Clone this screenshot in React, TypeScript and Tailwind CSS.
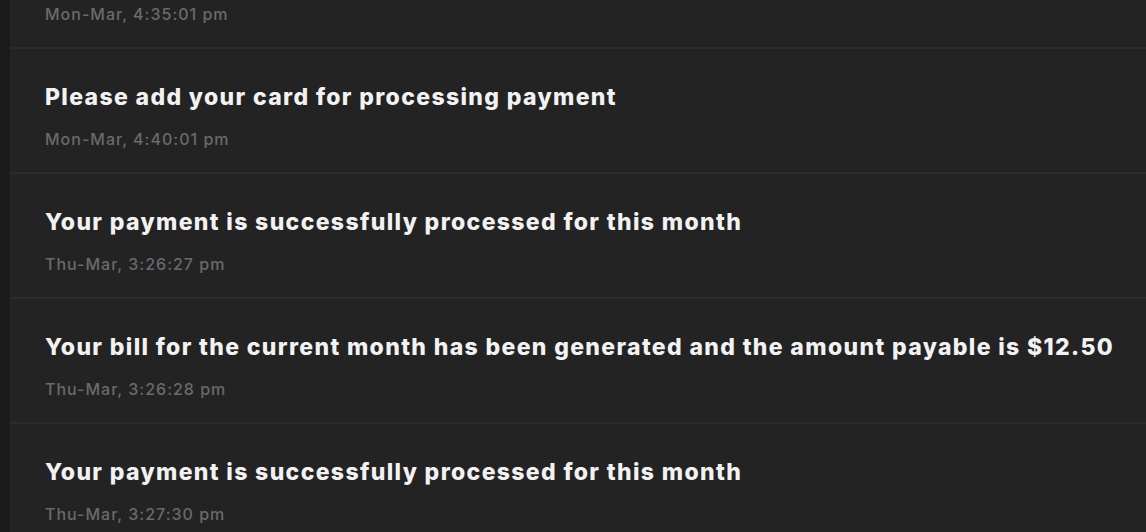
const notifications = [
  { title: "Your payment is successfully processed for this month", time: "Mon-Mar, 4:35:01 pm" },
  { title: "Please add your card for processing payment", time: "Mon-Mar, 4:40:01 pm" },
  { title: "Your payment is successfully processed for this month", time: "Thu-Mar, 3:26:27 pm" },
  {
    title: "Your bill for the current month has been generated and the amount payable is $12.50",
    time: "Thu-Mar, 3:26:28 pm",
  },
  { title: "Your payment is successfully processed for this month", time: "Thu-Mar, 3:27:30 pm" },
]

function NotificationRow({ title, time }: { title: string; time: string }) {
  return (
    <li className="h-[125px] border-b-2 border-[#2c2c2d] pl-[35px] pt-[34px]">
      <p className="text-[23px] leading-[28px] font-extrabold text-[#f2f2f2] tracking-[1.35px] whitespace-nowrap">
        {title}
      </p>
      <p className="mt-[18px] text-[16px] leading-[20px] font-medium text-[#6a6a6c] tracking-[1px]">{time}</p>
    </li>
  )
}

export default function App() {
  return (
    <div
      className="w-[1146px] h-[532px] overflow-hidden bg-[#1c1c1d] flex"
      style={{ fontFamily: "Inter, 'Noto Sans', sans-serif" }}
    >
      <div className="w-[10px] shrink-0 bg-[#1b1b1c]" />
      <div className="flex-1 bg-[#232324] overflow-hidden">
        <ul className="-mt-[76px]">
          {notifications.map((n, i) => (
            <NotificationRow key={i} title={n.title} time={n.time} />
          ))}
        </ul>
      </div>
    </div>
  )
}
